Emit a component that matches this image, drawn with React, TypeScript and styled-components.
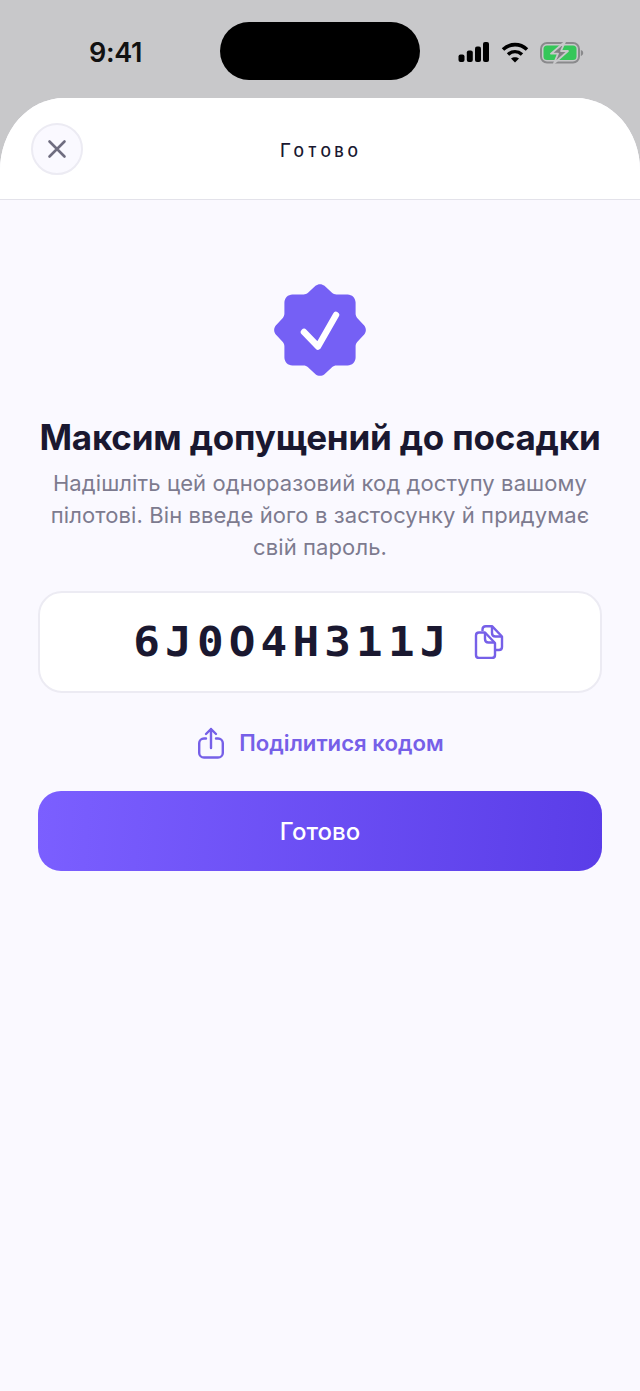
import React from 'react';
import styled, { createGlobalStyle } from 'styled-components';

const GlobalStyle = createGlobalStyle`
  html, body {
    margin: 0;
    padding: 0;
    background: #c8c8ca;
  }
  * {
    box-sizing: border-box;
  }
`;

const Page = styled.div`
  width: 640px;
  height: 1391px;
  display: flex;
  flex-direction: column;
  overflow: hidden;
  background: #c8c8ca;
  font-family: Inter, 'Noto Sans', sans-serif;
`;

const StatusBar = styled.div`
  height: 98px;
  flex: none;
  display: grid;
  grid-template-columns: 1fr 200px 1fr;
  align-items: start;
  padding-top: 22px;
`;

const Clock = styled.div`
  padding-left: 89px;
  margin-top: 16px;
  font-size: 27px;
  line-height: 30px;
  font-weight: 600;
  color: #111;
  letter-spacing: -0.3px;
`;

const Island = styled.div`
  height: 58px;
  border-radius: 29px;
  background: #000;
`;

const StatusIcons = styled.div`
  display: flex;
  align-items: center;
  justify-content: flex-end;
  gap: 10px;
  margin-top: 18px;
  padding-right: 56px;
  height: 24px;
`;

const Sheet = styled.div`
  flex: 1;
  display: flex;
  flex-direction: column;
  background: #faf9ff;
  border-radius: 64px 64px 0 0 / 72px 72px 0 0;
  overflow: hidden;
`;

const Header = styled.header`
  height: 102px;
  flex: none;
  display: flex;
  align-items: center;
  justify-content: center;
  position: relative;
  background: #fff;
  border-bottom: 1px solid #e3e2ea;
`;

const CloseButton = styled.button`
  position: absolute;
  left: 31px;
  top: 25px;
  width: 52px;
  height: 52px;
  padding: 0;
  display: flex;
  align-items: center;
  justify-content: center;
  border-radius: 50%;
  border: 2px solid #ecebf3;
  background: #faf9ff;
`;

const HeaderTitle = styled.div`
  font-family: 'DejaVu Sans Mono', monospace;
  font-size: 19px;
  font-weight: 500;
  letter-spacing: 2.1px;
  color: #1a1830;
  margin-top: 3px;
`;

const Content = styled.main`
  display: flex;
  flex-direction: column;
  align-items: center;
  padding: 84px 38px 0;
`;

const Title = styled.h1`
  margin: 39px 0 0;
  font-size: 35px;
  line-height: 44px;
  font-weight: 700;
  color: #1a1830;
  letter-spacing: -0.2px;
  white-space: nowrap;
`;

const Description = styled.p`
  margin: 8px 0 0;
  width: 564px;
  text-align: center;
  font-size: 22px;
  line-height: 32px;
  font-weight: 400;
  letter-spacing: 0.1px;
  color: #7d7b8f;
`;

const CodeCard = styled.div`
  margin-top: 28px;
  width: 564px;
  height: 102px;
  display: flex;
  align-items: center;
  justify-content: center;
  gap: 28px;
  background: #fff;
  border: 2px solid #ecebf3;
  border-radius: 24px;
`;

// the mono face runs narrow at this height, so the glyphs get a slight horizontal stretch
const CodeText = styled.span`
  display: inline-block;
  font-family: 'DejaVu Sans Mono', monospace;
  font-size: 41px;
  font-weight: 700;
  letter-spacing: 4.8px;
  color: #1a1830;
  transform: scaleX(1.08);
  margin: 0 7px 0 9px;
`;

const ShareRow = styled.div`
  margin-top: 34px;
  padding-left: 2px;
  display: flex;
  align-items: center;
  gap: 15px;
  font-size: 22.2px;
  line-height: 32px;
  font-weight: 600;
  color: #7660e8;
`;

const DoneButton = styled.button`
  margin-top: 32px;
  width: 564px;
  height: 80px;
  border: none;
  border-radius: 23px;
  background: linear-gradient(94deg, #7b5fff 0%, #5a3de8 100%);
  color: #fff;
  font-family: inherit;
  font-size: 24px;
  font-weight: 500;
`;

const SignalIcon = () => (
  <svg width="32" height="20" viewBox="0 0 32 20" fill="#000">
    <rect x="0.5" y="12.5" width="6" height="7.5" rx="2" />
    <rect x="8.8" y="8.5" width="6" height="11.5" rx="2" />
    <rect x="17" y="4.5" width="6" height="15.5" rx="2" />
    <rect x="25" y="0" width="6" height="20" rx="2" />
  </svg>
);

const WifiIcon = () => (
  <svg width="30" height="21" viewBox="-1 0 30 21" fill="none" stroke="#000" strokeWidth="3.6">
    <path d="M2 7.5C9 1 19 1 26 7.5" />
    <path d="M7 12.5c4.2-3.6 9.8-3.6 14 0" />
    <path d="M14 20.5l-4-4c2.2-1.8 5.8-1.8 8 0z" fill="#000" stroke="none" />
  </svg>
);

const BatteryIcon = () => (
  <svg width="44" height="23" viewBox="0 0 44 23">
    <rect x="1" y="2" width="38" height="19.5" rx="6" fill="none" stroke="#8a8a8c" strokeWidth="2" />
    <rect x="3.5" y="4.5" width="33" height="14.5" rx="3.5" fill="#35c759" />
    <path d="M40.8 9c1.6.4 2.4 1.6 2.4 3s-.8 2.6-2.4 3z" fill="#8a8a8c" />
    <path d="M25 .8 11 12.7h7L14 22.4l14-12.4h-7z" fill="#808082" stroke="#c8c8ca" strokeWidth="1.8" strokeLinejoin="round" />
  </svg>
);

const CloseIcon = () => (
  <svg width="20" height="20" viewBox="0 0 20 20" fill="none" stroke="#6f6d80" strokeWidth="2.6" strokeLinecap="round">
    <path d="M2.5 2.5l15 15M17.5 2.5l-15 15" />
  </svg>
);

// eight-lobed verified badge with a check mark
const BadgeIcon = () => (
  <svg width="92" height="92" viewBox="0 0 92 92">
    <path
      d="M41.5 1.800c2.600-2.200 6.400-2.200 9 0l7.500 7c1.200 1 2.800 1.600 4.400 1.600h11.200c4.400 0 8 3.600 8 8v11.200c0 1.600.6 3.200 1.600 4.400l7 7.500c2.200 2.600 2.200 6.400 0 9l-7 7.500c-1 1.200-1.600 2.800-1.600 4.400v11.200c0 4.400-3.600 8-8 8h-11.200c-1.600 0-3.200.6-4.400 1.600l-7.500 7c-2.600 2.200-6.400 2.200-9 0l-7.500-7c-1.200-1-2.800-1.600-4.400-1.600h-11.200c-4.400 0-8-3.600-8-8v-11.200c0-1.600-.6-3.200-1.600-4.400l-7-7.500c-2.200-2.600-2.200-6.400 0-9l7-7.500c1-1.200 1.600-2.800 1.600-4.400v-11.200c0-4.400 3.600-8 8-8h11.200c1.600 0 3.200-.6 4.400-1.600z"
      fill="#7560f5"
    />
    <path d="M30 48l14 14.500L62 31" fill="none" stroke="#fff" strokeWidth="6.5" strokeLinecap="round" strokeLinejoin="round" />
  </svg>
);

const CopyIcon = () => (
  <svg width="30" height="34" viewBox="0 0 30 34" fill="none" stroke="#7660e8" strokeWidth="2.4" strokeLinejoin="round">
    <path d="M8.500 6V4.500c0-2 1.500-3.300 3.300-3.300H18L28 11.500V22c0 1.800-1.300 3-3 3h-3" />
    <path d="M18 1.200V8c0 2 1.500 3.500 3.500 3.500H28" />
    <path d="M5 7.500h6L21 18v12c0 1.800-1.300 3-3 3H5c-1.700 0-3-1.200-3-3V10.500c0-1.700 1.300-3 3-3z" fill="#fff" />
    <path d="M11 7.500V14c0 2 1.500 3.500 3.500 3.500H21" />
  </svg>
);

const ShareIcon = () => (
  <svg width="26" height="32" viewBox="0 0 26 32" fill="none" stroke="#7660e8" strokeWidth="2.4" strokeLinecap="round" strokeLinejoin="round">
    <path d="M8 11.500H6c-2.600 0-4.800 2-4.800 4.600v9.800c0 2.600 2.200 4.600 4.800 4.600h14c2.600 0 4.800-2 4.800-4.600v-9.800c0-2.600-2.200-4.600-4.800-4.600h-2" />
    <path d="M13 21V2M8 7l5-5 5 5" />
  </svg>
);

export default function App() {
  return (
    <Page>
      <GlobalStyle />
      <StatusBar>
        <Clock>9:41</Clock>
        <Island />
        <StatusIcons>
          <SignalIcon />
          <WifiIcon />
          <BatteryIcon />
        </StatusIcons>
      </StatusBar>
      <Sheet>
        <Header>
          <CloseButton aria-label="Закрити">
            <CloseIcon />
          </CloseButton>
          <HeaderTitle>Готово</HeaderTitle>
        </Header>
        <Content>
          <BadgeIcon />
          <Title>Максим допущений до посадки</Title>
          <Description>
            Надішліть цей одноразовий код доступу вашому пілотові. Він введе його в застосунку й придумає свій пароль.
          </Description>
          <CodeCard>
            <CodeText>6J0O4H311J</CodeText>
            <CopyIcon />
          </CodeCard>
          <ShareRow>
            <ShareIcon />
            Поділитися кодом
          </ShareRow>
          <DoneButton>Готово</DoneButton>
        </Content>
      </Sheet>
    </Page>
  );
}
